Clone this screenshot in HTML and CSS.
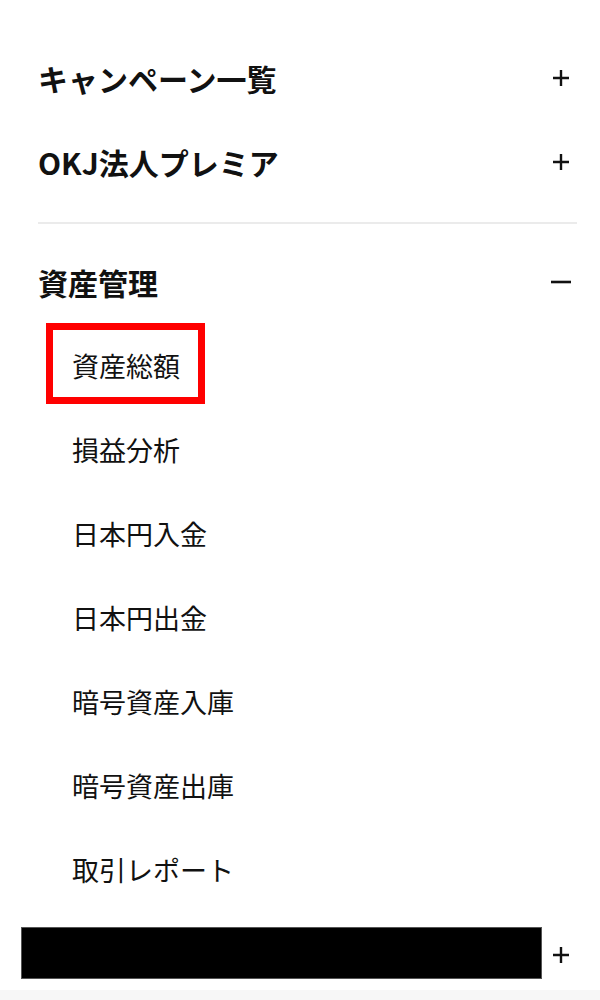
FILE: index.html
```html
<!DOCTYPE html>
<html lang="ja">
<head>
    <meta charset="UTF-8">
    <meta name="viewport" content="width=device-width, initial-scale=1.0">
    <title>メニュー</title>
    <link rel="stylesheet" href="styles.css">
</head>
<body>
    <nav class="menu">
        <div class="menu-row">
            <span class="menu-title">キャンペーン一覧</span>
            <span class="toggle">
                <svg width="18" height="18" viewBox="0 0 18 18"><path d="M9 1v16M1 9h16" stroke="#111" stroke-width="2.4" fill="none"/></svg>
            </span>
        </div>
        <div class="menu-row">
            <span class="menu-title">OKJ法人プレミア</span>
            <span class="toggle">
                <svg width="18" height="18" viewBox="0 0 18 18"><path d="M9 1v16M1 9h16" stroke="#111" stroke-width="2.4" fill="none"/></svg>
            </span>
        </div>

        <hr class="divider">

        <div class="menu-row">
            <span class="menu-title">資産管理</span>
            <span class="toggle">
                <svg width="22" height="18" viewBox="0 0 22 18"><path d="M1 9h20" stroke="#111" stroke-width="2.6" fill="none"/></svg>
            </span>
        </div>
        <ul class="submenu">
            <li><a class="sub-link highlight" href="#">資産総額</a></li>
            <li><a class="sub-link" href="#">損益分析</a></li>
            <li><a class="sub-link" href="#">日本円入金</a></li>
            <li><a class="sub-link" href="#">日本円出金</a></li>
            <li><a class="sub-link" href="#">暗号資産入庫</a></li>
            <li><a class="sub-link" href="#">暗号資産出庫</a></li>
            <li><a class="sub-link" href="#">取引レポート</a></li>
        </ul>

        <div class="menu-row last-row">
            <span class="redacted"></span>
            <span class="toggle toggle-low">
                <svg width="18" height="18" viewBox="0 0 18 18"><path d="M9 1v16M1 9h16" stroke="#111" stroke-width="2.4" fill="none"/></svg>
            </span>
        </div>
    </nav>
    <div class="footer-strip"></div>
</body>
</html>
```

FILE: styles.css
```css
body {
    margin: 0;
    padding: 0;
    background: #fff;
    font-family: "Noto Sans CJK JP", "Noto Sans", sans-serif;
    color: #111;
}

.menu {
    padding: 36px 23px 0 38px;
}

.menu-row {
    display: flex;
    align-items: center;
    justify-content: space-between;
    height: 84px;
}

.menu-title {
    font-size: 30px;
    font-weight: 700;
    line-height: 1;
}

.toggle {
    width: 24px;
    margin-right: 4px;
    display: flex;
    justify-content: center;
    align-items: center;
}

.divider {
    border: none;
    height: 2px;
    background: #ebebeb;
    margin: 18px 0 16px 0;
}

.submenu {
    list-style: none;
    margin: 0;
    padding: 0;
}

.submenu li {
    height: 84px;
    display: flex;
    align-items: center;
    padding-left: 34px;
}

.sub-link {
    position: relative;
    font-size: 27px;
    line-height: 40px;
    color: #111;
    text-decoration: none;
}

/* red annotation box round the current item */
.highlight::after {
    content: "";
    position: absolute;
    top: -23px;
    bottom: -18px;
    left: -26px;
    right: -25px;
    border: 7px solid #ff0000;
}

.last-row {
    height: 78px;
    padding-top: 4px;
    box-sizing: border-box;
}

.redacted {
    display: block;
    width: 519px;
    height: 50px;
    margin-left: -17px;
    background: #000;
    border: 1px solid #555;
}

.toggle-low {
    margin-top: 4px;
}

.footer-strip {
    height: 10px;
    background: #f7f7f7;
}
```
